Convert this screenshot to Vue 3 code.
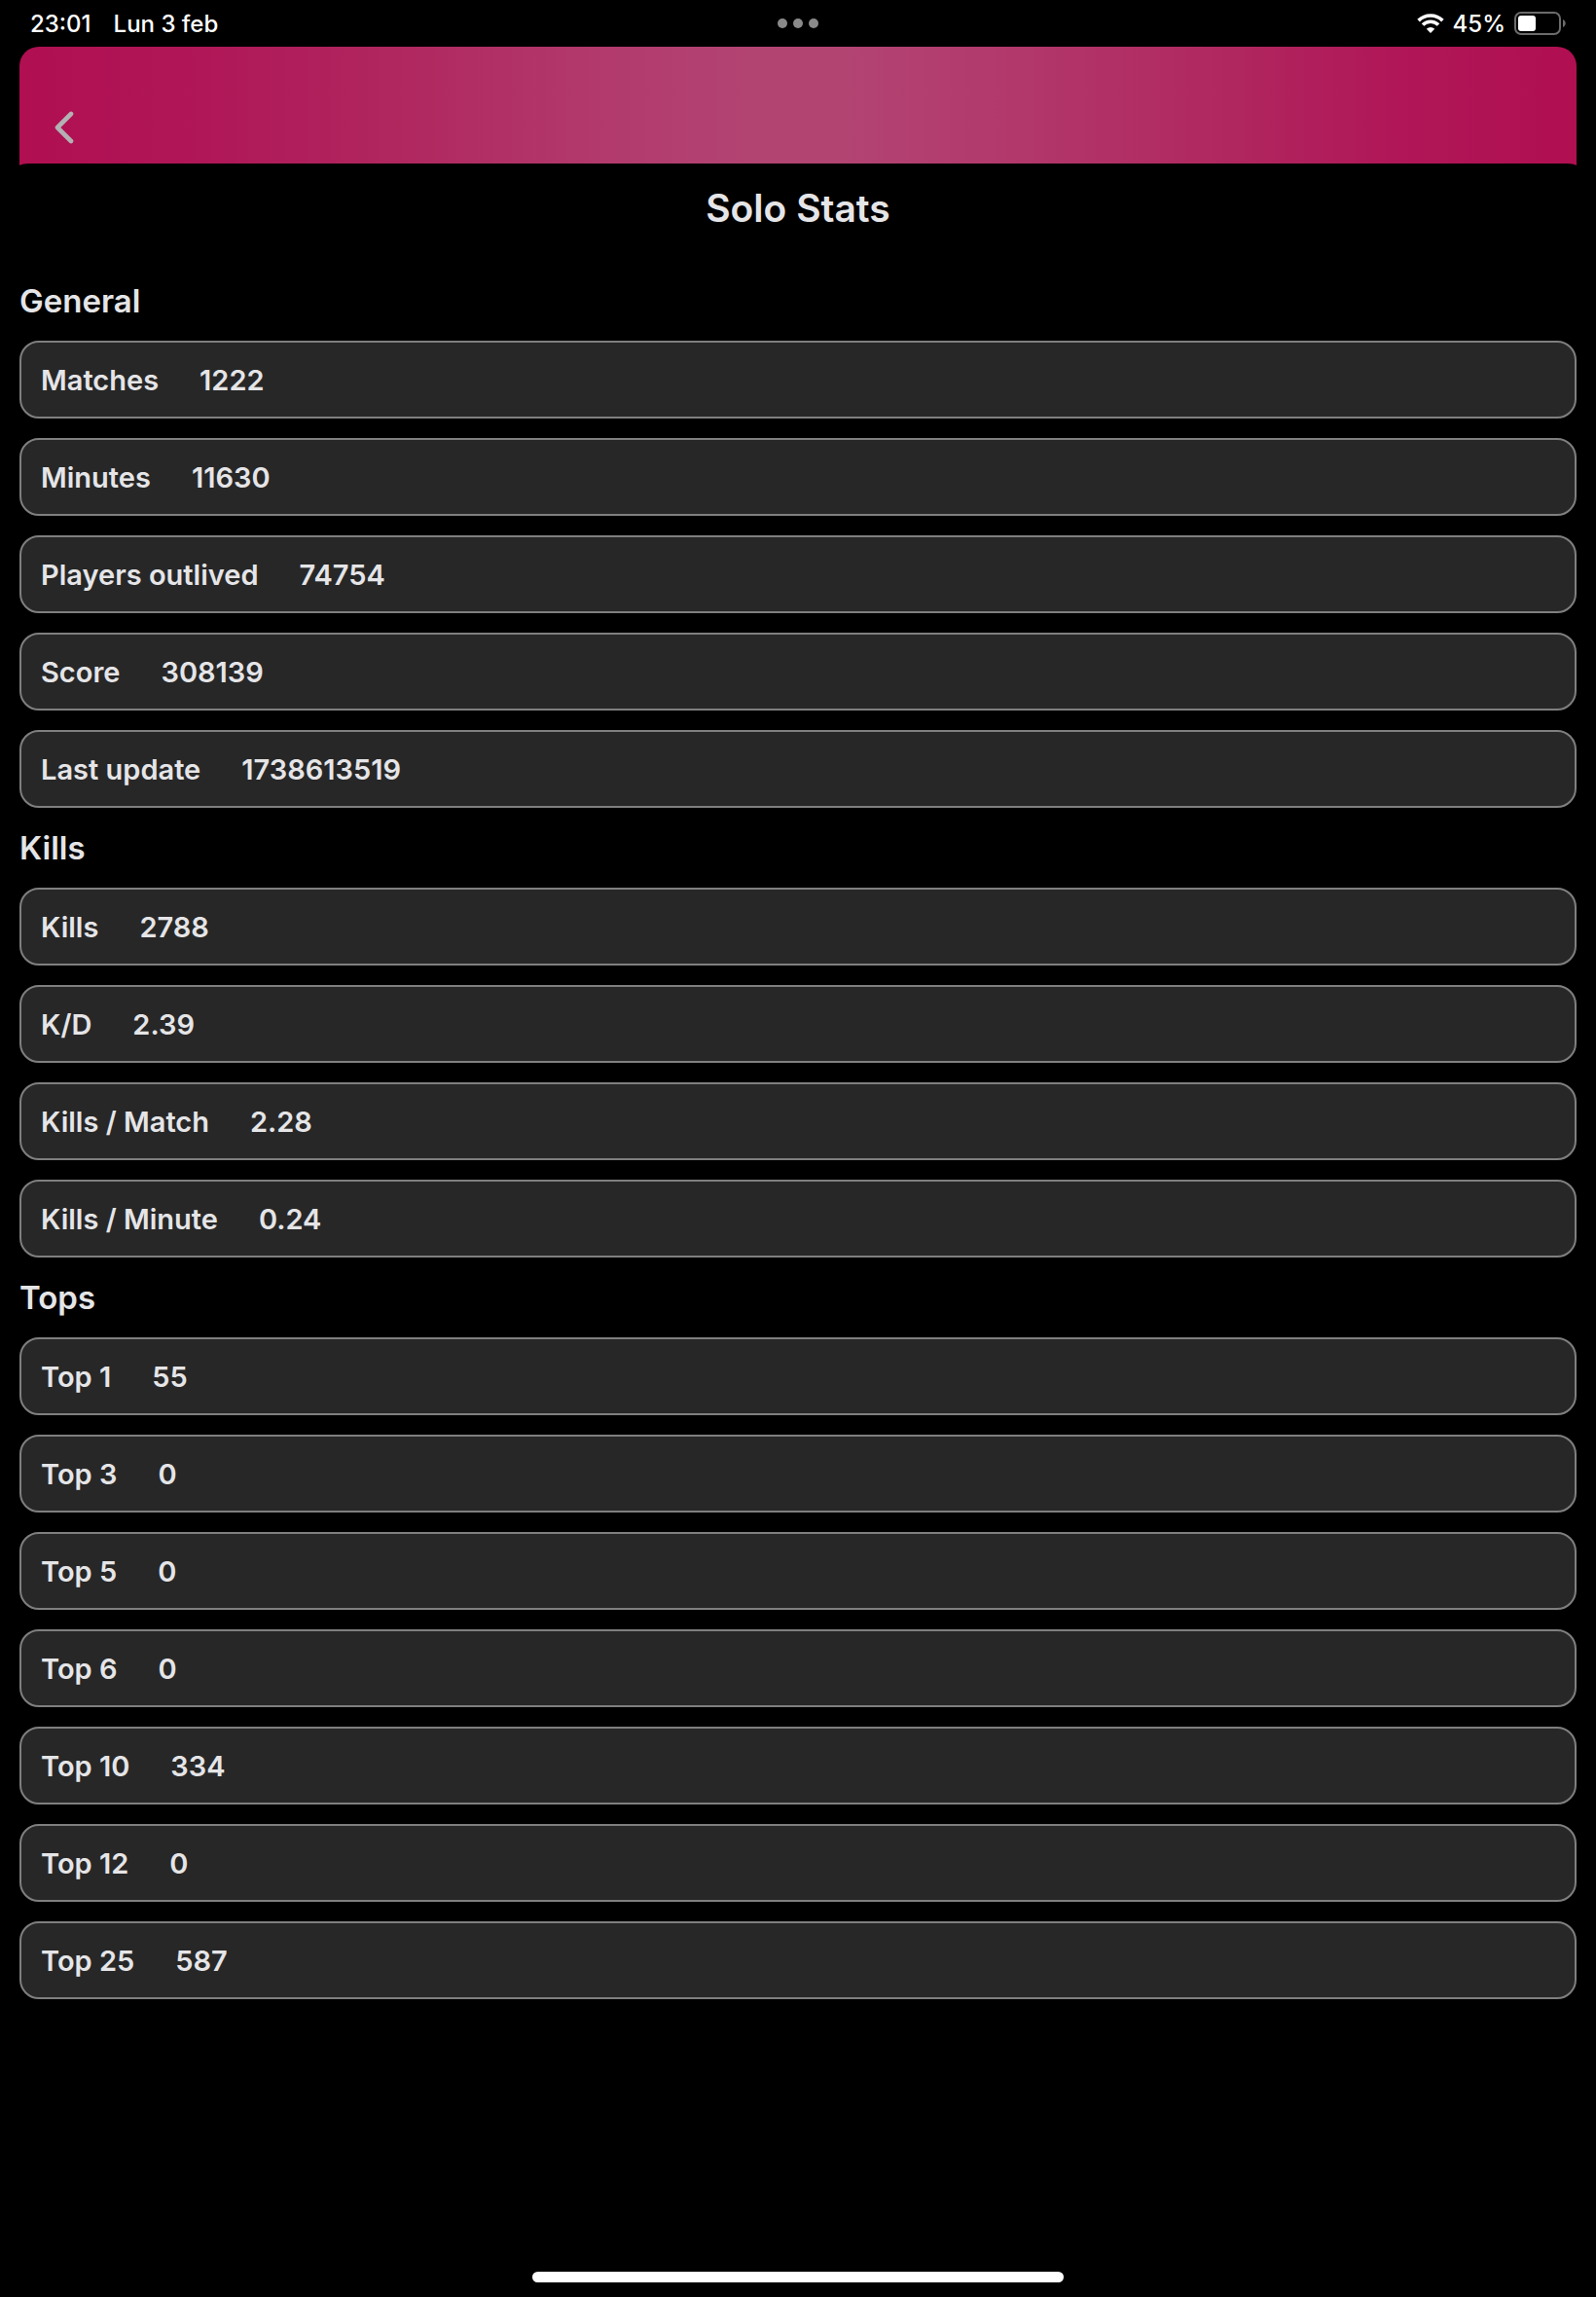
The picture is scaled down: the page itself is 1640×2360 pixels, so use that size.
<script setup>
const sections = [
  {
    title: 'General',
    stats: [
      ['Matches', '1222'],
      ['Minutes', '11630'],
      ['Players outlived', '74754'],
      ['Score', '308139'],
      ['Last update', '1738613519'],
    ],
  },
  {
    title: 'Kills',
    stats: [
      ['Kills', '2788'],
      ['K/D', '2.39'],
      ['Kills / Match', '2.28'],
      ['Kills / Minute', '0.24'],
    ],
  },
  {
    title: 'Tops',
    stats: [
      ['Top 1', '55'],
      ['Top 3', '0'],
      ['Top 5', '0'],
      ['Top 6', '0'],
      ['Top 10', '334'],
      ['Top 12', '0'],
      ['Top 25', '587'],
    ],
  },
]
</script>

<template>
  <div class="screen">
    <div class="status">
      <div class="status-side">
        <span>23:01</span>
        <span>Lun 3 feb</span>
      </div>
      <div class="dots"><i></i><i></i><i></i></div>
      <div class="status-side status-right">
        <svg class="wifi" width="28" height="20" viewBox="0 0 28 20" aria-hidden="true">
          <g fill="none" stroke="#fff" stroke-width="3.6">
            <path d="M1.6 7.1A17.6 17.6 0 0 1 26.4 7.1" />
            <path d="M6 11.6A11.3 11.3 0 0 1 22 11.6" />
          </g>
          <path d="M14 20L9.8 15.8A6 6 0 0 1 18.2 15.8Z" fill="#fff" />
        </svg>
        <span>45%</span>
        <svg class="battery" width="53" height="24" viewBox="0 0 53 24" aria-hidden="true">
          <rect x="1" y="1" width="46" height="22" rx="6" fill="none" stroke="#6b6b6b" stroke-width="2" />
          <rect x="4" y="4" width="18" height="16" rx="3" fill="#fff" />
          <path d="M50 8C53.6 9.4 53.6 14.6 50 16Z" fill="#6b6b6b" />
        </svg>
      </div>
    </div>

    <header class="banner">
      <button class="back" type="button" aria-label="Back">
        <svg width="20" height="34" viewBox="0 0 20 34" aria-hidden="true">
          <path d="M17 3L3 17L17 31" fill="none" stroke="#b3b1b3" stroke-width="4.6" stroke-linecap="round" stroke-linejoin="round" />
        </svg>
      </button>
    </header>

    <main class="sheet">
      <h1>Solo Stats</h1>
      <section v-for="section in sections" :key="section.title">
        <h2>{{ section.title }}</h2>
        <dl>
          <div v-for="[label, value] in section.stats" :key="label" class="row">
            <dt>{{ label }}</dt>
            <dd>{{ value }}</dd>
          </div>
        </dl>
      </section>
    </main>

    <div class="home"></div>
  </div>
</template>

<style>
body {
  background: #000;
}
</style>

<style scoped>
.screen {
  display: flex;
  flex-direction: column;
  box-sizing: border-box;
  min-height: 100vh;
  padding-bottom: 15px;
  background: #000;
  color: #e5e5e7;
  font-family: Inter, "Liberation Sans", sans-serif;
  font-weight: 600;
}

.status {
  display: flex;
  align-items: center;
  height: 48px;
  padding: 0 31px;
  color: #fff;
  font-size: 24px;
  font-weight: 500;
}

.status-side {
  display: flex;
  flex: 1;
  align-items: center;
  gap: 23px;
}

.status-right {
  justify-content: flex-end;
  gap: 9px;
}

.dots {
  display: flex;
  gap: 6px;
}

.dots i {
  width: 10px;
  height: 10px;
  border-radius: 50%;
  background: #8a8a8a;
}

.banner {
  box-sizing: border-box;
  height: 130px;
  margin: 0 20px;
  padding: 56px 24px;
  border-radius: 20px 20px 0 0;
  background: linear-gradient(90deg, #b00f51, #b01758 12%, #b0285f 25%, #b2396c 37%, #b24472 47%, #b24472 53%, #b2396c 63%, #b0285f 77%, #b01758 88%, #b00f51);
}

.back {
  display: flex;
  align-items: center;
  justify-content: center;
  width: 44px;
  height: 54px;
  padding: 0;
  border: 0;
  background: none;
}

.sheet {
  flex: 1;
  margin-top: -10px;
  padding: 0 20px;
  border-radius: 30px 30px 0 0;
  background: #000;
}

h1 {
  margin: 0 0 8px;
  font-size: 39px;
  font-weight: 600;
  line-height: 92px;
  text-align: center;
}

h2 {
  margin: 0;
  font-size: 33px;
  font-weight: 600;
  line-height: 82px;
}

dl {
  display: flex;
  flex-direction: column;
  gap: 20px;
  margin: 0;
}

.row {
  display: flex;
  align-items: center;
  gap: 42px;
  box-sizing: border-box;
  height: 80px;
  padding: 0 20px;
  border: 2px solid #7f7f7f;
  border-radius: 20px;
  background: #272727;
  font-size: 29px;
}

dd {
  margin: 0;
}

.home {
  align-self: center;
  width: 33.3%;
  height: 11px;
  border-radius: 6px;
  background: #fff;
}
</style>
